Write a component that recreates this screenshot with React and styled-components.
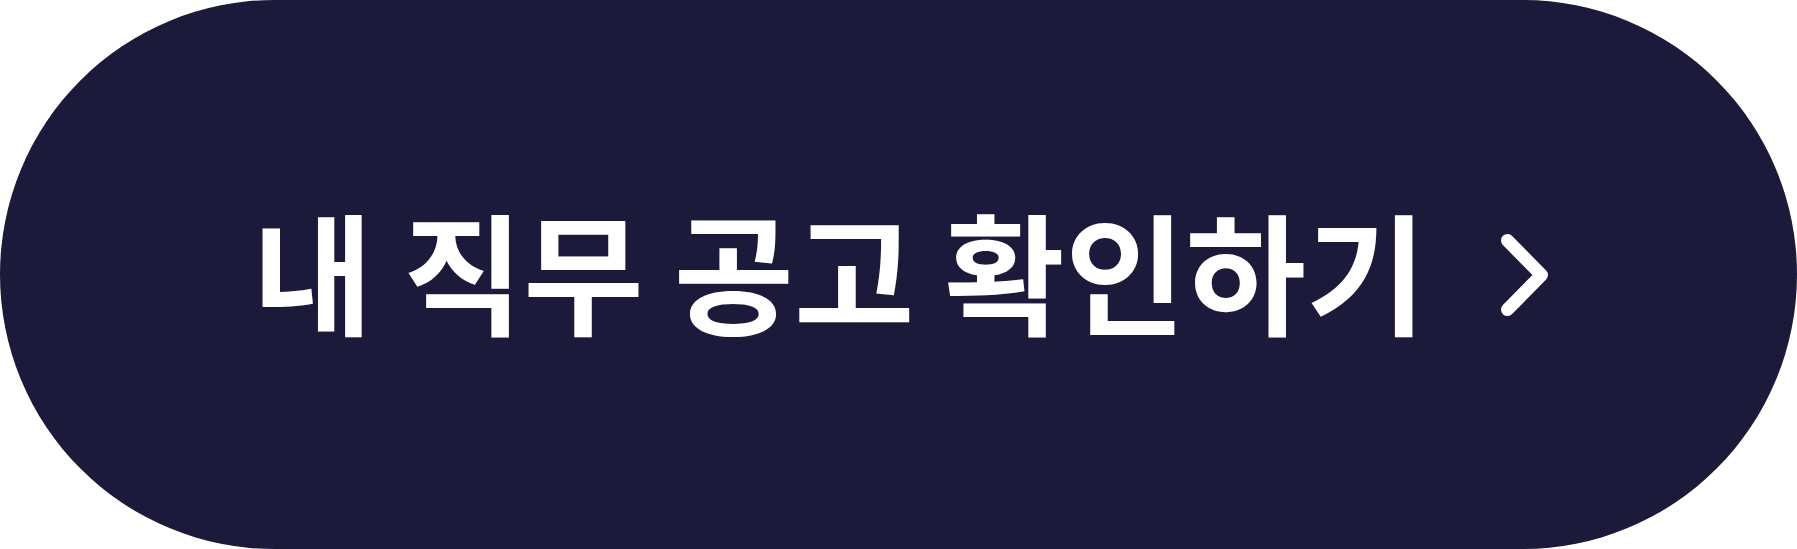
import React from 'react'
import styled, { createGlobalStyle } from 'styled-components'

const GlobalStyle = createGlobalStyle`
  html, body {
    margin: 0;
    padding: 0;
    background: #ffffff;
  }
`

const PillButton = styled.button`
  width: 1797px;
  height: 549px;
  border: none;
  border-radius: 275px;
  background: #1b1a3a;
  color: #ffffff;
  display: flex;
  align-items: center;
  justify-content: center;
  gap: 75px;
  padding: 0 0 0 4px;
  cursor: pointer;
`

const Label = styled.span`
  font-family: "Noto Sans CJK KR", "Noto Sans", sans-serif;
  font-weight: 700;
  font-size: 131px;
  line-height: 1;
  white-space: pre;
  margin-bottom: 12px;
`

const Chevron = () => (
  <svg width="47" height="82" viewBox="0 0 47 82" fill="none">
    <path
      d="M6.5 6.5 L40.5 41 L6.5 75.5"
      stroke="#ffffff"
      strokeWidth="13"
      strokeLinecap="round"
      strokeLinejoin="round"
    />
  </svg>
)

const App = () => {
  return (
    <>
      <GlobalStyle />
      <PillButton>
        <Label>내 직무 공고 확인하기</Label>
        <Chevron />
      </PillButton>
    </>
  )
}

export default App
